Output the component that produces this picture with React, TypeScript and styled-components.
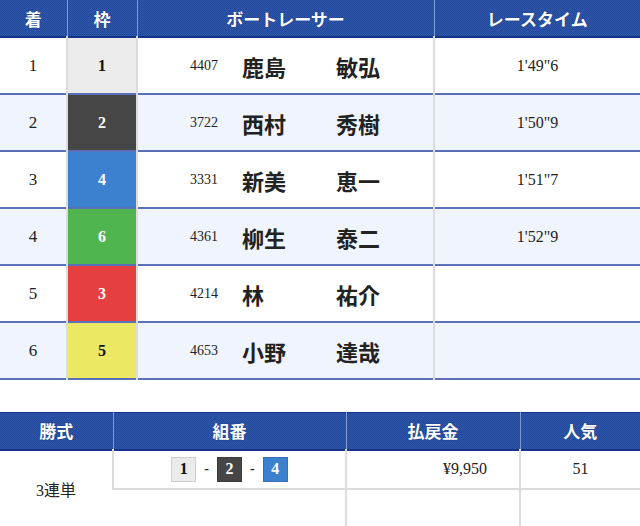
import styled, { createGlobalStyle } from 'styled-components';

const GlobalStyle = createGlobalStyle`
  body {
    margin: 0;
    background: #fff;
    font-family: "Liberation Serif", "Noto Sans CJK JP", serif;
    color: #222;
  }
`;

const Wrapper = styled.div`
  width: 640px;
`;

const Table = styled.table<{ $gap?: number }>`
  width: 640px;
  border-collapse: collapse;
  table-layout: fixed;
  margin-top: ${(p) => p.$gap ?? 0}px;
`;

const HeadRow = styled.tr<{ $top?: boolean }>`
  height: 37px;
  background-color: #2a50a2;
  background-image: repeating-conic-gradient(#2f58ab 0 25%, #23479a 0 50%);
  background-size: 2px 2px;
  border-top: ${(p) => (p.$top ? '1px solid #15358c' : 'none')};
  border-bottom: 2px solid #14348a;
`;

const HeadCell = styled.th`
  color: #fff;
  font-size: 17px;
  font-weight: bold;
  text-align: center;
  padding: 0;
  border-left: 1px solid #7d98d2;
  text-shadow: 0 0 1px #0d2a70;
  &:first-child {
    border-left: none;
  }
`;

const Row = styled.tr<{ $alt: boolean }>`
  height: 57px;
  background: ${(p) => (p.$alt ? '#f0f5fd' : '#fff')};
  border-bottom: 2px solid #5a70b8;
`;

const Cell = styled.td`
  padding: 0;
  text-align: center;
  border-left: 2px solid #dcdcdc;
  &:first-child {
    border-left: none;
  }
`;

const RankCell = styled(Cell)`
  font-size: 17px;
`;

const FRAME_COLORS: Record<number, [string, string]> = {
  1: ['#ebebeb', '#111'],
  2: ['#464646', '#fff'],
  3: ['#e63f3f', '#fff'],
  4: ['#3c80d0', '#fff'],
  5: ['#ece864', '#111'],
  6: ['#50b54e', '#fff'],
};

const FrameCell = styled(Cell)<{ $frame: number }>`
  background: ${(p) => FRAME_COLORS[p.$frame][0]};
  color: ${(p) => FRAME_COLORS[p.$frame][1]};
  font-size: 16px;
  font-weight: bold;
  border-right: 2px solid #dcdcdc;
`;

const RacerCell = styled(Cell)`
  text-align: left;
`;

const Racer = styled.div`
  display: flex;
  align-items: center;
  padding-left: 52px;
`;

const RegNo = styled.span`
  width: 52px;
  font-size: 14px;
`;

const Surname = styled.span`
  width: 94px;
  font-size: 22px;
  font-weight: bold;
`;

const GivenName = styled.span`
  font-size: 22px;
  font-weight: bold;
`;

const TimeCell = styled(Cell)`
  font-size: 16px;
`;

const PayRow = styled.tr`
  height: 39px;
  border-bottom: 2px solid #dcdcdc;
`;

const PayCell = styled.td`
  padding: 0;
  text-align: center;
  font-size: 16px;
  border-left: 2px solid #dcdcdc;
  &:first-child {
    border-left: none;
  }
`;

const AmountCell = styled(PayCell)`
  text-align: right;
  padding-right: 32px;
`;

const Combo = styled.div`
  display: flex;
  align-items: center;
  justify-content: center;
  gap: 8px;
`;

const Chip = styled.span<{ $frame: number }>`
  display: inline-flex;
  align-items: center;
  justify-content: center;
  width: 25px;
  height: 25px;
  box-sizing: border-box;
  border: 1px solid rgba(0, 0, 0, 0.12);
  background: ${(p) => FRAME_COLORS[p.$frame][0]};
  color: ${(p) => FRAME_COLORS[p.$frame][1]};
  font-size: 16px;
  font-weight: bold;
`;

const Dash = styled.span`
  font-size: 14px;
  font-weight: bold;
`;

const results = [
  { rank: 1, frame: 1, reg: '4407', sur: '鹿島', given: '敏弘', time: `1'49"6` },
  { rank: 2, frame: 2, reg: '3722', sur: '西村', given: '秀樹', time: `1'50"9` },
  { rank: 3, frame: 4, reg: '3331', sur: '新美', given: '恵一', time: `1'51"7` },
  { rank: 4, frame: 6, reg: '4361', sur: '柳生', given: '泰二', time: `1'52"9` },
  { rank: 5, frame: 3, reg: '4214', sur: '林', given: '祐介', time: '' },
  { rank: 6, frame: 5, reg: '4653', sur: '小野', given: '達哉', time: '' },
];

export default function App() {
  return (
    <Wrapper>
      <GlobalStyle />
      <Table>
        <colgroup>
          <col style={{ width: 67 }} />
          <col style={{ width: 70 }} />
          <col style={{ width: 297 }} />
          <col style={{ width: 206 }} />
        </colgroup>
        <thead>
          <HeadRow>
            <HeadCell>着</HeadCell>
            <HeadCell>枠</HeadCell>
            <HeadCell>ボートレーサー</HeadCell>
            <HeadCell>レースタイム</HeadCell>
          </HeadRow>
        </thead>
        <tbody>
          {results.map((r, i) => (
            <Row key={r.rank} $alt={i % 2 === 1}>
              <RankCell>{r.rank}</RankCell>
              <FrameCell $frame={r.frame}>{r.frame}</FrameCell>
              <RacerCell>
                <Racer>
                  <RegNo>{r.reg}</RegNo>
                  <Surname>{r.sur}</Surname>
                  <GivenName>{r.given}</GivenName>
                </Racer>
              </RacerCell>
              <TimeCell>{r.time}</TimeCell>
            </Row>
          ))}
        </tbody>
      </Table>

      <Table $gap={32}>
        <colgroup>
          <col style={{ width: 113 }} />
          <col style={{ width: 233 }} />
          <col style={{ width: 174 }} />
          <col style={{ width: 120 }} />
        </colgroup>
        <thead>
          <HeadRow $top>
            <HeadCell>勝式</HeadCell>
            <HeadCell>組番</HeadCell>
            <HeadCell>払戻金</HeadCell>
            <HeadCell>人気</HeadCell>
          </HeadRow>
        </thead>
        <tbody>
          <PayRow>
            <PayCell rowSpan={2}>3連単</PayCell>
            <PayCell>
              <Combo>
                <Chip $frame={1}>1</Chip>
                <Dash>-</Dash>
                <Chip $frame={2}>2</Chip>
                <Dash>-</Dash>
                <Chip $frame={4}>4</Chip>
              </Combo>
            </PayCell>
            <AmountCell>¥9,950</AmountCell>
            <PayCell>51</PayCell>
          </PayRow>
          <PayRow>
            <PayCell />
            <PayCell />
            <PayCell />
          </PayRow>
        </tbody>
      </Table>
    </Wrapper>
  );
}
